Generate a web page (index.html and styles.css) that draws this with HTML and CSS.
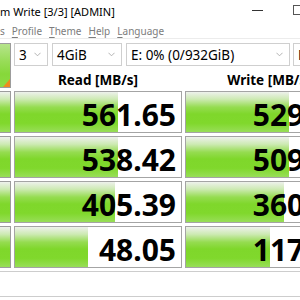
FILE: index.html
```html
<!DOCTYPE html>
<html>
<head>
<meta charset="utf-8">
<link rel="stylesheet" href="styles.css">
</head>
<body>
<div class="page">
  <div class="titlebar">
    <span class="title">m Write [3/3] [ADMIN]</span>
    <div class="winctl">
      <span class="min"></span>
      <span class="max"></span>
    </div>
  </div>
  <div class="menubar">
    <span class="mi">s</span>
    <span class="mi"><u>P</u>rofile</span>
    <span class="mi"><u>T</u>heme</span>
    <span class="mi"><u>H</u>elp</span>
    <span class="mi"><u>L</u>anguage</span>
  </div>
  <div class="board">
    <div class="allbtn"><span class="corner"></span></div>
    <div class="controls">
      <div class="combo c-count"><span>3</span><svg class="chev" viewBox="0 0 8 5"><path d="M0.5 0.5 L4 4 L7.5 0.5"/></svg></div>
      <div class="combo c-size"><span>4GiB</span><svg class="chev" viewBox="0 0 8 5"><path d="M0.5 0.5 L4 4 L7.5 0.5"/></svg></div>
      <div class="combo c-drive"><span>E: 0% (0/932GiB)</span><svg class="chev" viewBox="0 0 8 5"><path d="M0.5 0.5 L4 4 L7.5 0.5"/></svg></div>
      <div class="combo c-unit"><span>MB/s</span></div>
    </div>
    <div class="head">Read [MB/s]</div>
    <div class="head">Write [MB/s]</div>

    <div class="side"></div>
    <div class="cell"><div class="bar" style="width:103px"></div><span class="num">561.65</span></div>
    <div class="cell"><div class="bar" style="width:103px"></div><span class="num">529.54</span></div>

    <div class="side"></div>
    <div class="cell"><div class="bar" style="width:103px"></div><span class="num">538.42</span></div>
    <div class="cell"><div class="bar" style="width:103px"></div><span class="num">509.66</span></div>

    <div class="side"></div>
    <div class="cell"><div class="bar" style="width:100px"></div><span class="num">405.39</span></div>
    <div class="cell"><div class="bar" style="width:98px"></div><span class="num">360.12</span></div>

    <div class="side"></div>
    <div class="cell"><div class="bar" style="width:73px"></div><span class="num">48.05</span></div>
    <div class="cell"><div class="bar" style="width:84px"></div><span class="num">117.70</span></div>
  </div>
  <div class="comment"></div>
</div>
</body>
</html>
```

FILE: styles.css
```css
html, body {
  margin: 0;
  padding: 0;
  background: #ffffff;
}
body {
  width: 300px;
  height: 300px;
  overflow: hidden;
  font-family: "Noto Sans", "Open Sans", sans-serif;
  color: #000;
}
.page {
  width: 300px;
}
.titlebar {
  height: 22px;
  display: flex;
  align-items: center;
}
.title {
  flex: 1;
  font-size: 11px;
  white-space: nowrap;
  padding-top: 1px;
}
.winctl {
  display: flex;
  align-items: center;
  gap: 30px;
  margin-right: -3px;
  padding-bottom: 2px;
}
.min {
  display: block;
  width: 11px;
  height: 1px;
  background: #333;
}
.max {
  display: block;
  width: 8px;
  height: 8px;
  border: 1px solid #555;
}
.menubar {
  height: 15px;
  display: flex;
  align-items: center;
  gap: 7px;
  font-size: 10px;
  color: #7c7c7c;
  border-bottom: 1px solid #ececec;
  padding-top: 1px;
  white-space: nowrap;
}
.mi u {
  text-decoration-thickness: 1px;
  text-underline-offset: 2px;
}
.board {
  margin-top: 4px;
  display: grid;
  grid-template-columns: 11px 168px 168px;
  grid-template-rows: 23px 19px 42px 42px 42px 42px;
  column-gap: 3px;
  row-gap: 3px;
}
.allbtn {
  grid-row: 1 / span 2;
  grid-column: 1;
  position: relative;
  border: 1px solid #9c9c9c;
  border-left: none;
  background: linear-gradient(to bottom, #b6e48c 0%, #98dc58 40%, #86d83a 70%, #8edb45 100%);
}
.corner {
  position: absolute;
  right: 0;
  bottom: 0;
  width: 7px;
  height: 8px;
  background: #ef8a1f;
  clip-path: polygon(100% 0, 100% 100%, 0 100%);
}
.controls {
  grid-column: 2 / span 2;
  grid-row: 1;
  display: flex;
  gap: 4px;
}
.combo {
  flex-shrink: 0;
  box-sizing: border-box;
  height: 23px;
  border: 1px solid #cfcfcf;
  background: #fff;
  display: flex;
  align-items: center;
  justify-content: space-between;
  padding: 0 6px 0 4px;
  font-size: 13.5px;
  white-space: nowrap;
}
.c-count { width: 34px; }
.c-size { width: 70px; }
.c-drive { width: 164px; margin-right: -1px; }
.c-unit { width: 60px; }
.chev {
  width: 7px;
  height: 5px;
  fill: none;
  stroke: #a9a9a9;
  stroke-width: 1;
}
.head {
  grid-row: 2;
  font-weight: 700;
  font-size: 13.5px;
  text-align: center;
  line-height: 19px;
  padding-top: 2px;
  white-space: nowrap;
}
.side {
  grid-column: 1;
  border: 1px solid #9c9c9c;
  border-left: none;
  background: linear-gradient(to bottom, #eef1ec 0%, #cdeab3 18%, #95dc50 38%, #7fd72b 55%, #80d82c 78%, #98de58 100%);
}
.cell {
  border: 1px solid #a4a4a4;
  background: #fff;
  display: grid;
  overflow: hidden;
}
.bar {
  grid-area: 1 / 1;
  justify-self: start;
  height: 100%;
  background: linear-gradient(to bottom, #eef1ec 0%, #cdeab3 18%, #95dc50 38%, #7fd72b 55%, #80d82c 78%, #98de58 100%);
}
.num {
  grid-area: 1 / 1;
  justify-self: end;
  align-self: center;
  padding-right: 5px;
  padding-top: 5px;
  font-size: 30px;
  font-weight: 700;
  line-height: 30px;
  white-space: nowrap;
}
.comment {
  margin-top: 3px;
  height: 24px;
  border-top: 1px solid #cdcdcd;
  border-bottom: 1px solid #cdcdcd;
  background: #fff;
}
```
